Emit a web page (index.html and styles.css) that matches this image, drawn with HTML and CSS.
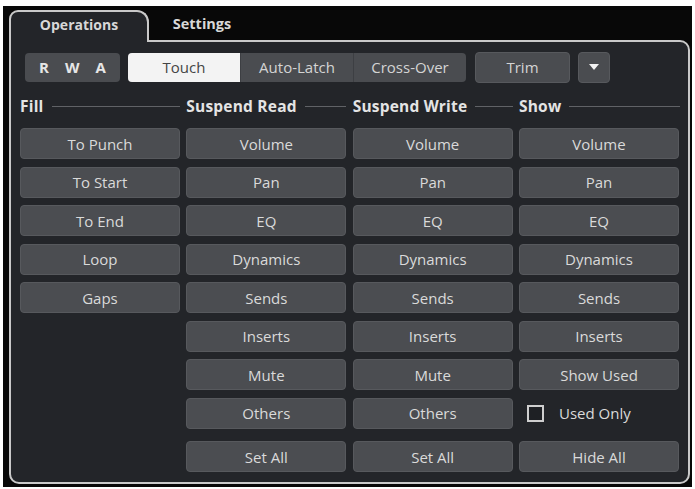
FILE: index.html
```html
<!DOCTYPE html>
<html>
<head>
<meta charset="utf-8">
<link rel="stylesheet" href="styles.css">
</head>
<body>
<div class="frame">
  <div class="tabs">
    <div class="tab active">Operations</div>
    <div class="tab">Settings</div>
  </div>
  <div class="panel">
    <div class="toolbar">
      <div class="rwa"><span>R</span><span>W</span><span>A</span></div>
      <div class="seg">
        <div class="seg-item on">Touch</div>
        <div class="seg-item">Auto-Latch</div>
        <div class="seg-item">Cross-Over</div>
      </div>
      <div class="tbtn trim">Trim</div>
      <div class="tbtn drop"><svg width="10" height="6" viewBox="0 0 10 6"><path d="M0 0H10L5 6Z" fill="#f2f2f2"/></svg></div>
    </div>
    <div class="cols">
      <div class="col">
        <div class="head"><span>Fill</span><i></i></div>
        <div class="btn">To Punch</div>
        <div class="btn">To Start</div>
        <div class="btn">To End</div>
        <div class="btn">Loop</div>
        <div class="btn">Gaps</div>
      </div>
      <div class="col">
        <div class="head"><span>Suspend Read</span><i></i></div>
        <div class="btn">Volume</div>
        <div class="btn">Pan</div>
        <div class="btn">EQ</div>
        <div class="btn">Dynamics</div>
        <div class="btn">Sends</div>
        <div class="btn">Inserts</div>
        <div class="btn">Mute</div>
        <div class="btn">Others</div>
        <div class="btn last">Set All</div>
      </div>
      <div class="col">
        <div class="head"><span>Suspend Write</span><i></i></div>
        <div class="btn">Volume</div>
        <div class="btn">Pan</div>
        <div class="btn">EQ</div>
        <div class="btn">Dynamics</div>
        <div class="btn">Sends</div>
        <div class="btn">Inserts</div>
        <div class="btn">Mute</div>
        <div class="btn">Others</div>
        <div class="btn last">Set All</div>
      </div>
      <div class="col">
        <div class="head"><span>Show</span><i></i></div>
        <div class="btn">Volume</div>
        <div class="btn">Pan</div>
        <div class="btn">EQ</div>
        <div class="btn">Dynamics</div>
        <div class="btn">Sends</div>
        <div class="btn">Inserts</div>
        <div class="btn">Show Used</div>
        <div class="check"><span class="box"></span><span>Used Only</span></div>
        <div class="btn last">Hide All</div>
      </div>
    </div>
  </div>
</div>
</body>
</html>
```
FILE: styles.css
```css
html, body {
  margin: 0;
  padding: 0;
  background: #ffffff;
}
body {
  font-family: "Open Sans", "Noto Sans", sans-serif;
  font-size: 15px;
  color: #dcdcdc;
}
.frame {
  margin: 6px 3px 0 3px;
  width: 689px;
  height: 481px;
  background: #080808;
  padding: 4px 0 0 6px;
  box-sizing: border-box;
}
.tabs {
  display: flex;
  height: 30px;
  position: relative;
  z-index: 2;
}
.tab {
  font-weight: 700;
  font-size: 14px;
  color: #d8d8d8;
  display: flex;
  align-items: center;
  justify-content: center;
  box-sizing: border-box;
}
.tab.active {
  width: 140px;
  height: 32px;
  border: 2px solid #c9c9c9;
  border-bottom: none;
  border-radius: 9px 12px 0 0;
  background: #232529;
  padding-bottom: 5px;
}
.tab:not(.active) {
  width: 106px;
  padding-bottom: 3px;
  font-size: 14.5px;
}
.panel {
  width: 681px;
  height: 444px;
  box-sizing: border-box;
  border: 2px solid #c9c9c9;
  border-radius: 0 10px 10px 10px;
  background: #232529;
  padding: 10px 9px 0 9px;
}
.toolbar {
  display: flex;
  align-items: center;
  height: 30px;
  padding-left: 5px;
}
.rwa {
  width: 95px;
  height: 29px;
  background: #4a4c50;
  border-radius: 4px;
  display: flex;
  align-items: center;
  justify-content: space-around;
  padding: 0 6px;
  box-sizing: border-box;
  font-weight: 700;
  font-size: 15px;
  color: #e6e6e6;
}
.seg {
  margin-left: 8px;
  display: flex;
  height: 29px;
  border-radius: 4px;
  overflow: hidden;
  background: #4a4c50;
}
.seg-item {
  width: 112px;
  display: flex;
  align-items: center;
  justify-content: center;
  color: #d4d4d4;
}
.seg-item + .seg-item {
  border-left: 1px solid #3d3f43;
}
.seg-item.on {
  background: #f3f3f3;
  color: #454545;
}
.tbtn {
  height: 31px;
  background: #4a4c50;
  border: 1px solid #57595d;
  border-radius: 4px;
  box-sizing: border-box;
  display: flex;
  align-items: center;
  justify-content: center;
  color: #d4d4d4;
}
.trim {
  margin-left: 9px;
  width: 95px;
}
.drop {
  margin-left: 8px;
  width: 32px;
}
.cols {
  margin-top: 14px;
  display: grid;
  grid-template-columns: repeat(4, 160px);
  column-gap: 6.33px;
}
.col {
  display: flex;
  flex-direction: column;
  gap: 7.5px;
}
.head {
  height: 20px;
  display: flex;
  align-items: center;
  font-weight: 700;
  font-size: 15.5px;
  letter-spacing: 0.2px;
  color: #e4e4e4;
  margin-bottom: 4.5px;
  white-space: nowrap;
}
.head i {
  flex: 1;
  height: 1px;
  background: #606266;
  margin-left: 8px;
}
.col:last-child .head i {
  margin-right: -1px;
}
.btn {
  height: 31px;
  box-sizing: border-box;
  background: #4b4d51;
  border: 1px solid #57595d;
  border-radius: 4px;
  display: flex;
  align-items: center;
  justify-content: center;
  color: #dadada;
}
.btn.last {
  margin-top: 5px;
}
.check {
  height: 31px;
  display: flex;
  align-items: center;
  padding-left: 8px;
  color: #dadada;
}
.box {
  width: 17px;
  height: 17px;
  box-sizing: border-box;
  border: 2px solid #cfcfcf;
  background: #1e2024;
  margin-right: 15px;
}
```
